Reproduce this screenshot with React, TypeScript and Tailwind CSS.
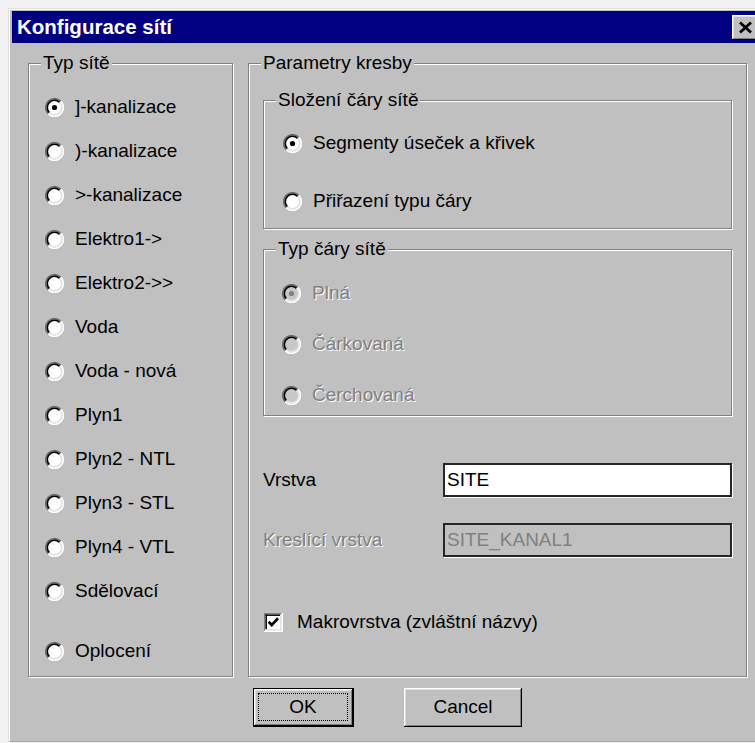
import type { ReactNode } from "react";

const networks = [
  "]-kanalizace",
  ")-kanalizace",
  ">-kanalizace",
  "Elektro1->",
  "Elektro2->>",
  "Voda",
  "Voda - nová",
  "Plyn1",
  "Plyn2 - NTL",
  "Plyn3 - STL",
  "Plyn4 - VTL",
  "Sdělovací",
];

const raised =
  "shadow-[inset_-1px_-1px_0_#000,inset_1px_1px_0_#fff,inset_-2px_-2px_0_#808080,inset_2px_2px_0_#dfdfdf]";

// 3d radio: dark arcs top-left, light arcs bottom-right
function Radio({ checked, disabled }: { checked?: boolean; disabled?: boolean }) {
  return (
    <svg width="19" height="19" viewBox="0 0 19 19" className="shrink-0">
      <circle cx="9.5" cy="9.5" r="7" fill={disabled ? "#c8c8c8" : "#fff"} />
      <path d="M3.27 15.73A8.8 8.8 0 0 1 15.73 3.27" stroke="#6a6a6a" strokeWidth="1.6" fill="none" />
      <path d="M15.73 3.27A8.8 8.8 0 0 1 3.27 15.73" stroke="#fff" strokeWidth="1.8" fill="none" />
      <path d="M4.4 14.6A7.2 7.2 0 0 1 14.6 4.4" stroke="#000" strokeWidth="1.6" fill="none" />
      <path d="M14.6 4.4A7.2 7.2 0 0 1 4.4 14.6" stroke="#e4e4e4" strokeWidth="1.6" fill="none" />
      {checked && <circle cx="9.5" cy="9.5" r="2.6" fill={disabled ? "#808080" : "#000"} />}
    </svg>
  );
}

function Check() {
  return (
    <svg width="19" height="19" viewBox="0 0 13 13" className="shrink-0">
      <rect x="0" y="0" width="13" height="13" fill="#fff" />
      <rect x="0" y="0" width="12" height="1" fill="#808080" />
      <rect x="0" y="0" width="1" height="12" fill="#808080" />
      <rect x="1" y="1" width="10" height="1" fill="#000" />
      <rect x="1" y="1" width="1" height="10" fill="#000" />
      <rect x="1" y="11" width="11" height="1" fill="#dfdfdf" />
      <rect x="11" y="1" width="1" height="11" fill="#dfdfdf" />
      <polyline points="3.2,6 5.3,8.2 9.6,3.6" stroke="#000" strokeWidth="1.8" fill="none" />
    </svg>
  );
}

function Group({
  title,
  className,
  children,
}: {
  title: string;
  className: string;
  children: ReactNode;
}) {
  return (
    <fieldset
      className={`border border-[#808080] shadow-[inset_1px_1px_0_#fff,1px_1px_0_#fff] ${className}`}
    >
      <legend className="ml-[12px] px-[2px] leading-[22px] bg-[#c0c0c0]">{title}</legend>
      {children}
    </fieldset>
  );
}

function Option({
  label,
  checked,
  disabled,
  className,
}: {
  label: string;
  checked?: boolean;
  disabled?: boolean;
  className: string;
}) {
  return (
    <div className={`flex items-center ${className}`}>
      <Radio checked={checked} disabled={disabled} />
      <span
        className={
          disabled ? "ml-[11px] text-[#808080] [text-shadow:1px_1px_0_#fff]" : "ml-[11px]"
        }
      >
        {label}
      </span>
    </div>
  );
}

export default function App() {
  return (
    <div className="w-[755px] h-[743px] overflow-hidden bg-[#f2f2f2] pt-[8px] pl-[8px] font-['Liberation_Sans',Arial,sans-serif] text-[19px] text-black">
      <div className="w-[758px] border-t border-l border-[#dfdfdf]">
        <div className="border-t border-l border-b border-white border-b-[#a8a8a8] pl-[2px] pt-[1px] bg-[#c0c0c0]">
          {/* title bar */}
          <div className="h-[32px] bg-[#000080] flex items-center justify-between pr-[7px]">
            <span className="pl-[5px] font-bold text-[20.5px] text-white leading-none">
              Konfigurace sítí
            </span>
            <div className={`w-[27px] h-[25px] bg-[#c0c0c0] flex items-center justify-center ${raised}`}>
              <svg width="15" height="13" viewBox="0 0 15 13">
                <path d="M2 1.5L13 11.5M13 1.5L2 11.5" stroke="#000" strokeWidth="2.8" />
              </svg>
            </div>
          </div>

          <div className="pl-[16px] pt-[9px] pb-[14px]">
            <div className="flex gap-[15px]">
              <Group title="Typ sítě" className="w-[205px] h-[625px]">
                <div className="pt-[11px] pl-[16px]">
                  {networks.map((n, i) => (
                    <Option key={n} label={n} checked={i === 0} className="h-[44px]" />
                  ))}
                  <Option label="Oplocení" className="h-[44px] mt-[16px]" />
                </div>
              </Group>

              <Group title="Parametry kresby" className="w-[497px] h-[625px]">
                <div className="px-[14px] pt-[15px]">
                  <Group title="Složení čáry sítě" className="h-[140px]">
                    <div className="pt-[3px] pl-[19px]">
                      <Option label="Segmenty úseček a křivek" checked className="h-[58px]" />
                      <Option label="Přiřazení typu čáry" className="h-[58px]" />
                    </div>
                  </Group>

                  <Group title="Typ čáry sítě" className="h-[178px] mt-[9px]">
                    <div className="pt-[8px] pl-[18px]">
                      <Option label="Plná" checked disabled className="h-[51px]" />
                      <Option label="Čárkovaná" disabled className="h-[51px]" />
                      <Option label="Čerchovaná" disabled className="h-[51px]" />
                    </div>
                  </Group>

                  <div className="flex items-center mt-[47px]">
                    <span className="w-[180px]">Vrstva</span>
                    <div className="w-[289px] h-[34px] bg-white border-2 border-[#262626] shadow-[1px_1px_0_#fff] flex items-center pl-[2px]">
                      SITE
                    </div>
                  </div>

                  <div className="flex items-center mt-[26px]">
                    <span className="w-[180px] text-[#808080] [text-shadow:1px_1px_0_#fff]">
                      Kreslící vrstva
                    </span>
                    <div className="w-[289px] h-[34px] bg-[#c0c0c0] border-2 border-[#262626] shadow-[1px_1px_0_#fff] flex items-center pl-[2px] text-[#808080]">
                      SITE_KANAL1
                    </div>
                  </div>

                  <div className="flex items-center mt-[51px] pl-[1px]">
                    <Check />
                    <span className="ml-[14px]">Makrovrstva (zvláštní názvy)</span>
                  </div>
                </div>
              </Group>
            </div>

            <div className="flex gap-[50px] mt-[11px] pl-[225px]">
              <div className="w-[101px] h-[39px] border border-black bg-[#c0c0c0]">
                <div className={`w-full h-full p-[4px] pr-[5px] pb-[5px] ${raised}`}>
                  <div className="w-full h-full border border-dotted border-black flex items-center justify-center">
                    OK
                  </div>
                </div>
              </div>
              <div className={`w-[118px] h-[39px] bg-[#c0c0c0] flex items-center justify-center ${raised}`}>
                Cancel
              </div>
            </div>
          </div>
        </div>
      </div>
    </div>
  );
}
